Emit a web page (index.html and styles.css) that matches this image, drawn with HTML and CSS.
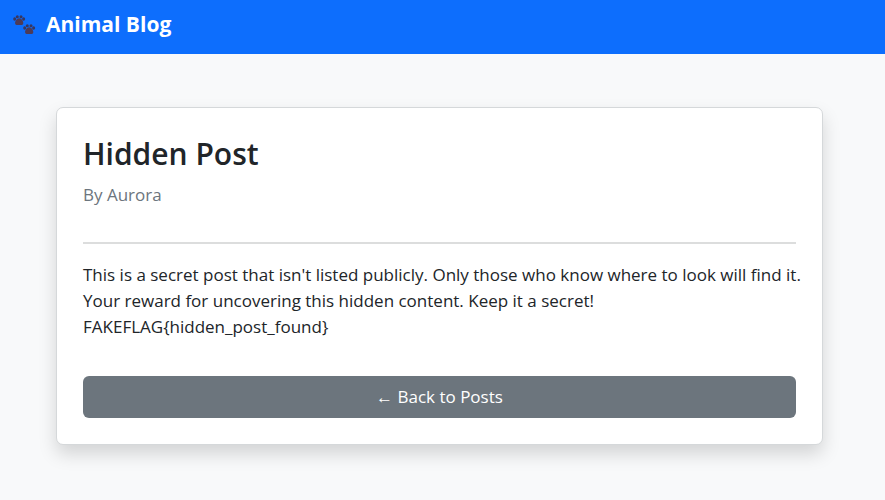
FILE: index.html
```html
<!DOCTYPE html>
<html lang="en">
<head>
<meta charset="utf-8">
<meta name="viewport" content="width=device-width, initial-scale=1">
<title>Hidden Post - Animal Blog</title>
<link rel="stylesheet" href="styles.css">
</head>
<body>
<nav class="navbar">
  <a class="brand" href="/">
    <svg class="paws" viewBox="0 0 24 24" aria-hidden="true">
      <defs>
        <g id="paw">
          <ellipse cx="1.700" cy="4" rx="1.500" ry="1.700"/>
          <ellipse cx="4.300" cy="1.700" rx="1.500" ry="1.500"/>
          <ellipse cx="8" cy="1.700" rx="1.500" ry="1.500"/>
          <ellipse cx="10.600" cy="4" rx="1.500" ry="1.700"/>
          <path class="pad" d="M6.200 3.200c2.200 0 4.300 3 4.100 5-.2 2-2.200 2-4.100 1.700-1.900.3-3.900.3-4.100-1.700C1.900 6.200 4 3.200 6.200 3.200z"/>
        </g>
      </defs>
      <use href="#paw" x="0" y="3"/>
      <use href="#paw" x="10" y="12"/>
    </svg>
    <span>Animal Blog</span>
  </a>
</nav>
<main class="container">
  <article class="card">
    <h1 class="title">Hidden Post</h1>
    <p class="author">By Aurora</p>
    <hr class="rule">
    <p class="content">This is a secret post that isn't listed publicly. Only those who know where to look will find it.<br>Your reward for uncovering this hidden content. Keep it a secret!<br>FAKEFLAG{hidden_post_found}</p>
    <a class="back" href="/">← Back to Posts</a>
  </article>
</main>
</body>
</html>
```
FILE: styles.css
```css
* { box-sizing: border-box; }

body {
  margin: 0;
  background: #f8f9fa;
  color: #212529;
  font: 17px/26px "Open Sans", "Noto Sans", sans-serif;
}

.navbar {
  display: flex;
  padding: 8px 13px 14px;
  background: #0d6efd;
}

.brand {
  display: flex;
  align-items: center;
  gap: 9px;
  color: #fff;
  font-size: 21px;
  font-weight: 700;
  line-height: 32px;
  text-decoration: none;
}

.paws { width: 24px; height: 24px; fill: #38375f; }

.pad { fill: #4d3b58; }

.container { padding: 53px 62px 53px 56px; }

.card {
  padding: 26px;
  background: #fff;
  border: 1px solid #d5d8da;
  border-radius: 7px;
  box-shadow: 0 9px 18px rgba(0, 0, 0, .15);
}

.title {
  margin: 0 0 8px;
  font-size: 30px;
  font-weight: 600;
  line-height: 40px;
}

.author { margin: 0 0 34px; color: #6c757d; }

.rule { margin: 0 0 18px; border: 0; border-top: 2px solid #dcdddd; }

.content { margin: 0 0 36px; }

@media (min-width: 860px) {
  .content { white-space: nowrap; }
}

.back {
  display: block;
  padding: 8px 13px;
  border-radius: 6px;
  background: #6c757d;
  color: #fff;
  text-align: center;
  text-decoration: none;
}
```
